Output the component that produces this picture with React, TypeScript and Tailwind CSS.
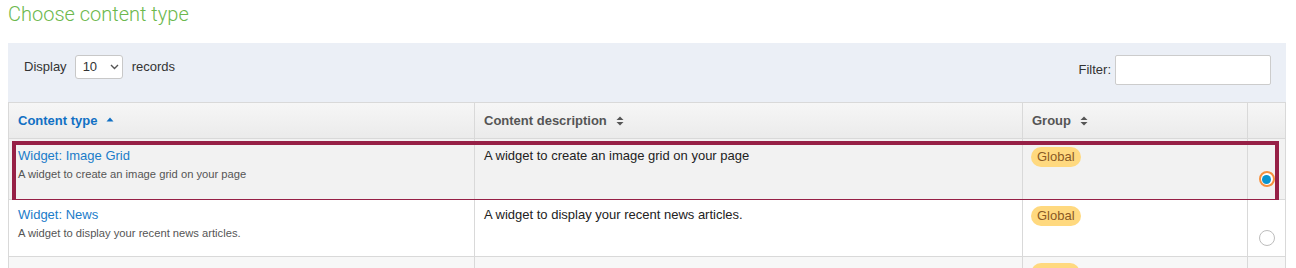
import { useState } from 'react';

interface Row {
  title: string;
  description: string;
  group: string;
}

const rows: Row[] = [
  {
    title: 'Widget: Image Grid',
    description: 'A widget to create an image grid on your page',
    group: 'Global',
  },
  {
    title: 'Widget: News',
    description: 'A widget to display your recent news articles.',
    group: 'Global',
  },
  // only the top edge of this one is on screen
  { title: '', description: '', group: '' },
];

function SortUp() {
  return (
    <svg width="8" height="5" viewBox="0 0 8 5" className="ml-[9px] mb-[3px]">
      <path d="M0.5 4.5 L4 0.6 L7.5 4.5 Z" fill="#1170c4" />
    </svg>
  );
}

function SortBoth() {
  return (
    <svg width="8" height="10" viewBox="0 0 8 10" className="ml-[9px]">
      <path d="M0.5 4 L4 0.5 L7.5 4 Z" fill="#555" />
      <path d="M0.5 6 L4 9.5 L7.5 6 Z" fill="#555" />
    </svg>
  );
}

function Radio({ checked, onClick }: { checked: boolean; onClick: () => void }) {
  return (
    <button
      onClick={onClick}
      className={`w-4 h-4 rounded-full flex items-center justify-center bg-white ${
        checked ? 'border-2 border-[#f6903d]' : 'border border-[#bdbdbd]'
      }`}
    >
      {checked && <span className="w-[9px] h-[9px] rounded-full bg-[#0b95cf]" />}
    </button>
  );
}

export default function App() {
  const [selected, setSelected] = useState(0);

  const heights = ['h-[60px] pt-[8px]', 'h-[56px] pt-[6px]', 'h-[56px] pt-[6px]'];
  const bgs = ['bg-[#f2f2f2]', 'bg-white', 'bg-[#f7f7f7]'];

  return (
    <div className="px-2 font-['Liberation_Sans',Arial,sans-serif] text-[13px] text-[#333]">
      <h1 className="h-[43px] text-[20px] leading-[28px] font-light text-[#6cb84d] font-['Roboto',sans-serif]">
        Choose content type
      </h1>

      <div className="w-[1278px] bg-[#ebeff6] h-[59px] flex items-start justify-between pl-4 pr-[15px] pt-3">
        <div className="flex items-center h-6">
          <span>Display</span>
          <div className="relative ml-2">
            <select className="appearance-none w-12 h-6 border border-[#c8c8c8] rounded-[3px] bg-white pl-[7px] text-[13px] text-[#333] outline-none">
              <option>10</option>
              <option>25</option>
              <option>50</option>
            </select>
            <svg
              width="9"
              height="6"
              viewBox="0 0 9 6"
              className="absolute right-[4px] top-[9px] pointer-events-none"
            >
              <path d="M1 1 L4.5 4.5 L8 1" fill="none" stroke="#555" strokeWidth="1.4" />
            </svg>
          </div>
          <span className="ml-[9px]">records</span>
        </div>
        <div className="flex items-center">
          <span className="mr-1">Filter:</span>
          <input className="w-[156px] h-[30px] border border-[#cccccc] rounded-[2px] bg-white outline-none px-1" />
        </div>
      </div>

      <div className="w-[1278px] border border-[#d9d9d9]">
        <div className="grid grid-cols-[465px_548px_225px_38px] h-[36px] border-b border-[#d9d9d9] bg-gradient-to-b from-[#f6f6f6] to-[#ebebeb] font-bold">
          <div className="flex items-center pl-[9px] text-[#1170c4]">
            Content type
            <SortUp />
          </div>
          <div className="flex items-center pl-[9px] border-l border-[#d9d9d9] text-[#555]">
            Content description
            <SortBoth />
          </div>
          <div className="flex items-center pl-[9px] border-l border-[#d9d9d9] text-[#555]">
            Group
            <SortBoth />
          </div>
          <div className="border-l border-[#d9d9d9]" />
        </div>

        {rows.map((row, i) => (
          <div
            key={i}
            className={`relative grid grid-cols-[465px_548px_225px_38px] border-b border-[#d9d9d9] ${bgs[i]}`}
          >
            <div className={`pl-[9px] ${heights[i]}`}>
              <div className="leading-[18px] text-[#1a7cc9]">{row.title}</div>
              <div className="leading-[18px] text-[11.2px] text-[#555]">{row.description}</div>
            </div>
            <div className={`pl-[9px] border-l border-[#d9d9d9] leading-[18px] text-[#222] ${heights[i]}`}>
              {row.description}
            </div>
            <div className={`pl-[8px] border-l border-[#d9d9d9] ${heights[i]}`}>
              <span className="inline-flex items-center min-w-[49px] h-5 px-[6px] rounded-full bg-[#ffd97f] text-[#8a5a24] text-[13px]">
                {row.group}
              </span>
            </div>
            <div className={`border-l border-[#d9d9d9] flex items-end justify-center ${i === 0 ? 'pb-[12px]' : 'pb-[10px]'}`}>
              {i < 2 && <Radio checked={selected === i} onClick={() => setSelected(i)} />}
            </div>
            {selected === i && (
              <div className="absolute left-[3px] top-[2px] w-[1267px] h-[62px] border-4 border-[#962046] pointer-events-none" />
            )}
          </div>
        ))}
      </div>
    </div>
  );
}
